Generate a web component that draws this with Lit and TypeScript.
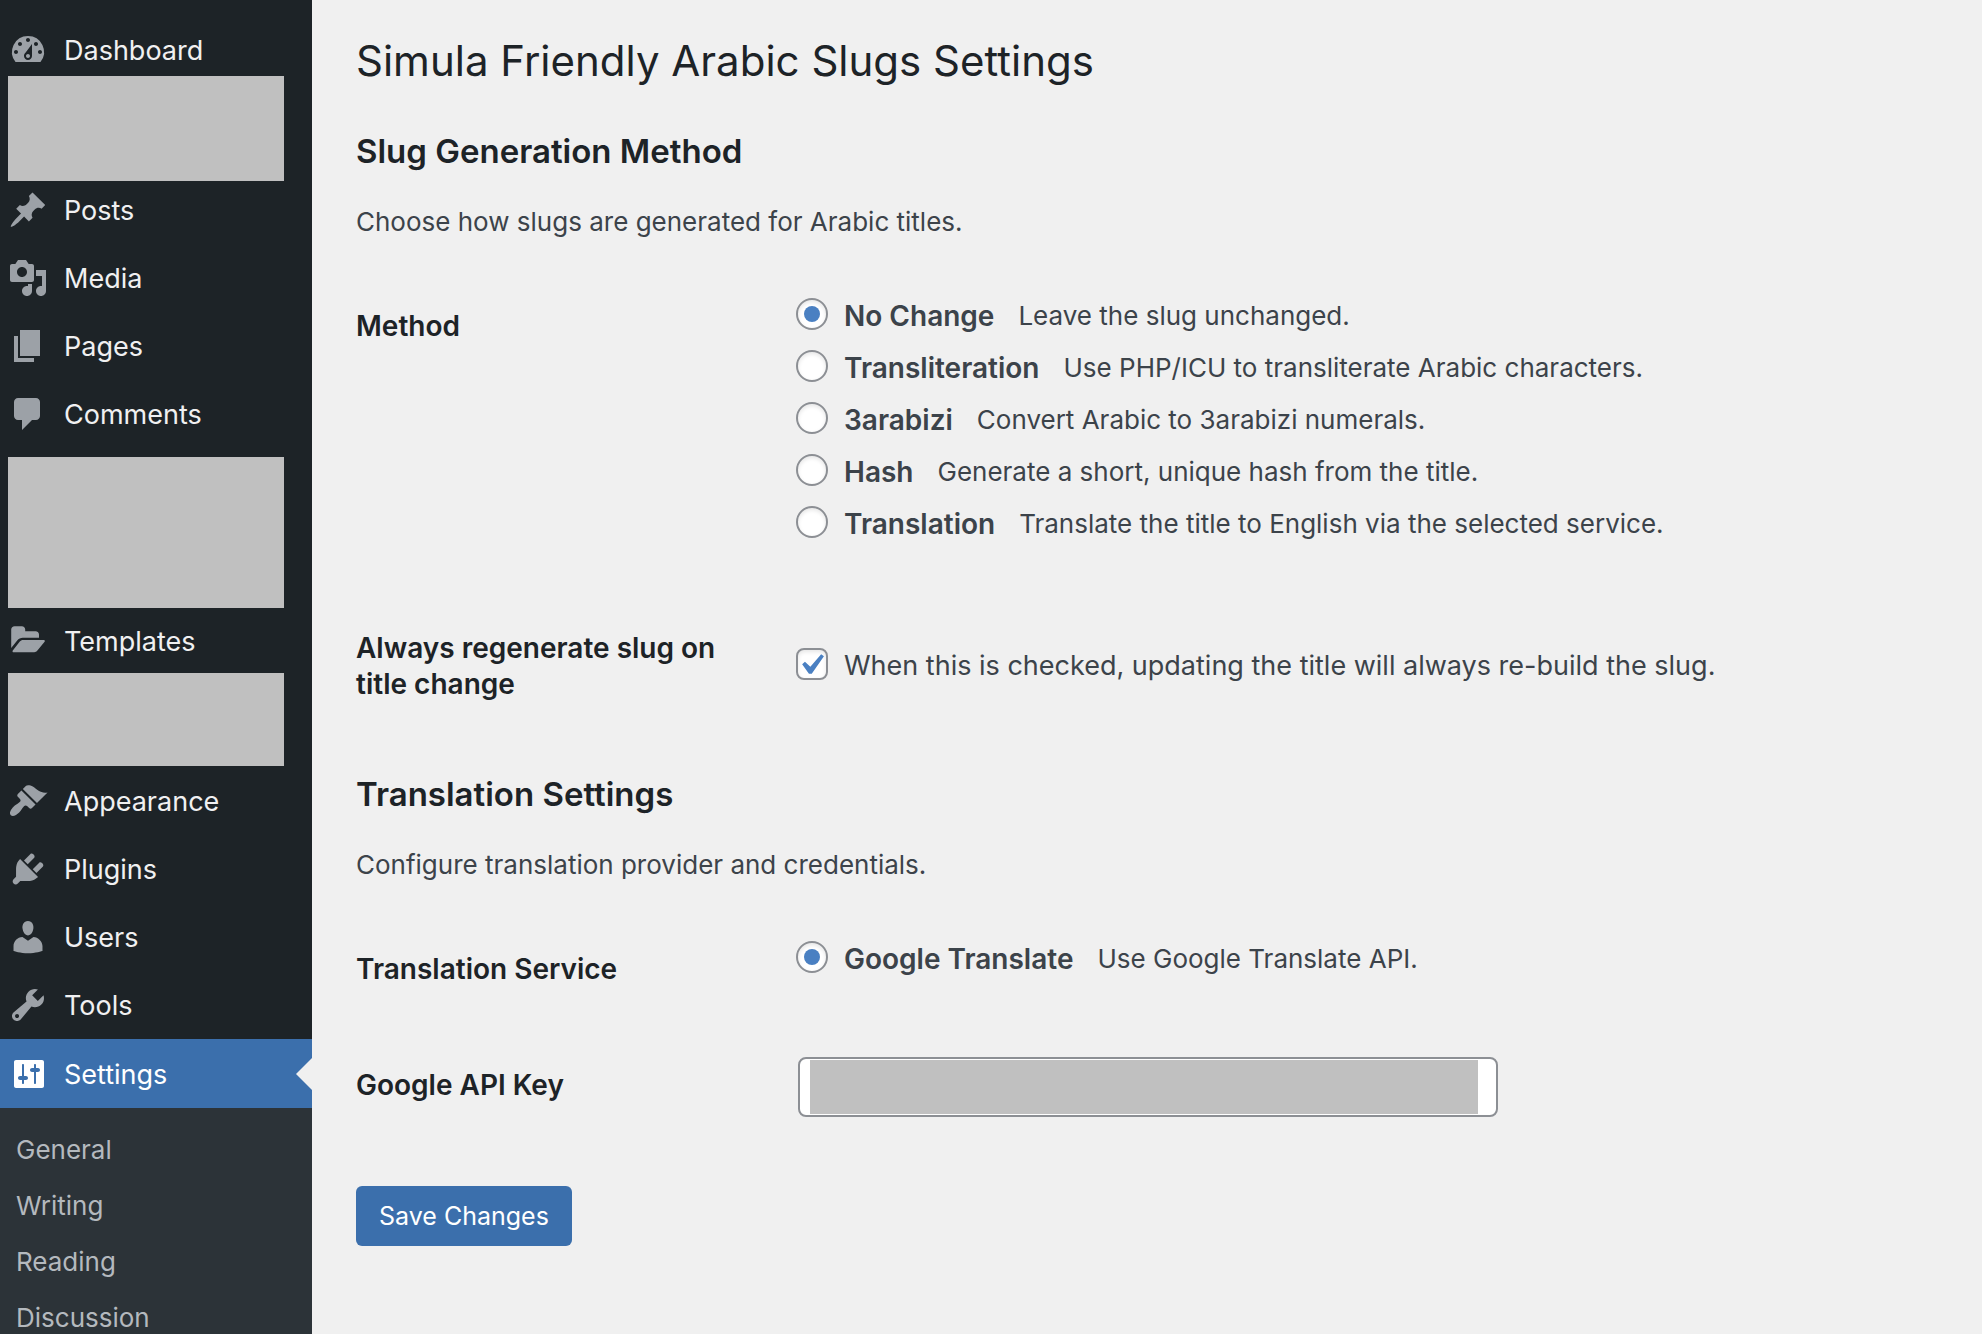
import { LitElement, html, css, svg, nothing } from "lit";
import { customElement, property, state } from "lit/decorators.js";
import { classMap } from "lit/directives/class-map.js";

const ICONS: Record<string, string> = {
  dashboard:
    "M3.76 16h12.48A7.998 7.998 0 0 0 10 3a7.998 7.998 0 0 0-6.24 13zM10 4c.55 0 1 .45 1 1s-.45 1-1 1-1-.45-1-1 .45-1 1-1zM6 6c.55 0 1 .45 1 1s-.45 1-1 1-1-.45-1-1 .45-1 1-1zm8 0c.55 0 1 .45 1 1s-.45 1-1 1-1-.45-1-1 .45-1 1-1zm-5.37 5.55L12 7v6c0 1.1-.9 2-2 2s-2-.9-2-2c0-.57.24-1.08.63-1.45zM4 10c.55 0 1 .45 1 1s-.45 1-1 1-1-.45-1-1 .45-1 1-1zm12 0c.55 0 1 .45 1 1s-.45 1-1 1-1-.45-1-1 .45-1 1-1zm-5 3c0-.55-.45-1-1-1s-1 .45-1 1 .45 1 1 1 1-.45 1-1z",
  posts:
    "M10.44 3.02l1.82-1.82 6.36 6.35-1.83 1.82c-1.05-.68-2.48-.57-3.41.36l-.75.75c-.92.93-1.04 2.35-.35 3.41l-1.83 1.82-2.41-2.41-2.8 2.79c-.42.42-3.38 2.71-3.8 2.29s1.86-3.39 2.28-3.81l2.79-2.79L4.1 9.36l1.83-1.82c1.05.69 2.48.57 3.4-.36l.75-.75c.93-.92 1.05-2.35.36-3.41z",
  media:
    "M13 11V4c0-.55-.45-1-1-1h-1.67L9 1H5L3.67 3H2c-.55 0-1 .45-1 1v7c0 .55.45 1 1 1h10c.55 0 1-.45 1-1zM7 4.5c1.38 0 2.5 1.12 2.5 2.5S8.38 9.5 7 9.5 4.5 8.38 4.5 7 5.62 4.5 7 4.5zM14 6h5v10.5c0 1.38-1.12 2.5-2.5 2.5S14 17.88 14 16.5s1.12-2.5 2.5-2.5c.17 0 .34.02.5.05V9h-3V6zm-4 8.05V13h2v3.5c0 1.38-1.12 2.5-2.5 2.5S7 17.88 7 16.5 8.12 14 9.5 14c.17 0 .34.02.5.05z",
  pages: "M6 15V2h10v13H6zm-1 1h8v2H3V5h2v11z",
  comments:
    "M5 2h9c1.1 0 2 .9 2 2v7c0 1.1-.9 2-2 2h-2l-5 5v-5H5c-1.1 0-2-.9-2-2V4c0-1.1.9-2 2-2z",
  templates:
    "M1.6 4.3c0-1 .7-1.7 1.7-1.7h3.6c1 0 1.7.7 1.7 1.7v.8h5.2c1 0 1.7.7 1.7 1.7v1.6H7.4c-1.1 0-2.1.5-2.8 1.3l-3 3.8zM5.9 10.3c.4-.5 1-.8 1.6-.8h10.4c.5 0 .7.5.4.9l-3.6 4.4c-.4.5-1 .8-1.6.8H2.8c-.5 0-.7-.5-.4-.9z",
  appearance:
    "M14.48 11.06L7.41 3.99l1.5-1.5c.5-.56 2.3-.47 3.51.32 1.21.8 1.43 1.28 2.91 2.1 1.18.64 2.45 1.26 4.45.85zm-.71.71L6.7 4.7 4.93 6.47c-.39.39-.39 1.02 0 1.41l1.06 1.06c.39.39.39 1.03 0 1.42-.6.6-1.43 1.11-2.21 1.69-.35.26-.7.53-1.01.84C1.43 14.23.4 16.08 1.4 17.07c.99 1 2.84-.03 4.18-1.36.31-.31.58-.66.85-1.02.57-.78 1.08-1.61 1.69-2.21.39-.39 1.02-.39 1.41 0l1.06 1.06c.39.39 1.02.39 1.41 0z",
  plugins:
    "M13.11 4.36L9.87 7.6 8 5.73l3.24-3.24c.35-.34 1.05-.2 1.56.32.52.51.66 1.21.31 1.55zm-8 1.77l.91-1.12 9.01 9.01-1.19.84c-.71.71-2.63 1.16-3.82 1.16H6.14L4.9 17.26c-.59.59-1.54.59-2.12 0-.59-.58-.59-1.53 0-2.12l1.24-1.24v-3.88c0-1.13.4-3.19 1.09-3.89zm7.26 3.97l3.24-3.24c.34-.35 1.04-.21 1.55.31.52.51.66 1.21.31 1.55l-3.24 3.25z",
  users:
    "M10 9.25c-2.27 0-2.73-3.44-2.73-3.44C7 4.02 7.82 2 9.97 2c2.16 0 2.98 2.02 2.71 3.81 0 0-.41 3.44-2.68 3.44zm0 2.57L12.72 10c2.39 0 4.52 2.33 4.52 4.53v2.49s-3.65 1.13-7.24 1.13c-3.65 0-7.24-1.13-7.24-1.13v-2.49c0-2.25 1.94-4.48 4.47-4.48z",
  tools:
    "M16.68 9.77c-1.34 1.34-3.3 1.67-4.95.99l-5.41 6.52c-.99.99-2.59.99-3.58 0s-.99-2.59 0-3.57l6.52-5.42c-.68-1.65-.35-3.61.99-4.95 1.28-1.28 3.12-1.62 4.72-1.06l-2.89 2.89 2.82 2.82 2.86-2.87c.53 1.58.18 3.39-1.08 4.65zM3.81 16.21c.4.39 1.04.39 1.43 0 .4-.4.4-1.04 0-1.43-.39-.4-1.03-.4-1.43 0-.39.39-.39 1.03 0 1.43z",
  settings:
    "M18 16V4c0-.55-.45-1-1-1H4c-.55 0-1 .45-1 1v12c0 .55.45 1 1 1h13c.55 0 1-.45 1-1zM8 11h1c.55 0 1 .45 1 1s-.45 1-1 1H8v1.5c0 .28-.22.5-.5.5s-.5-.22-.5-.5V13H6c-.55 0-1-.45-1-1s.45-1 1-1h1V5.5c0-.28.22-.5.5-.5s.5.22.5.5V11zm5-2h-1c-.55 0-1-.45-1-1s.45-1 1-1h1V5.5c0-.28.22-.5.5-.5s.5.22.5.5V7h1c.55 0 1 .45 1 1s-.45 1-1 1h-1v5.5c0 .28-.22.5-.5.5s-.5-.22-.5-.5V9z",
};

type MenuEntry =
  | { kind: "link"; id: string; label: string; children?: string[] }
  | { kind: "hidden"; size: string };

const MENU: MenuEntry[] = [
  { kind: "link", id: "dashboard", label: "Dashboard" },
  { kind: "hidden", size: "medium" },
  { kind: "link", id: "posts", label: "Posts" },
  { kind: "link", id: "media", label: "Media" },
  { kind: "link", id: "pages", label: "Pages" },
  { kind: "link", id: "comments", label: "Comments" },
  { kind: "hidden", size: "large" },
  { kind: "link", id: "templates", label: "Templates" },
  { kind: "hidden", size: "small" },
  { kind: "link", id: "appearance", label: "Appearance" },
  { kind: "link", id: "plugins", label: "Plugins" },
  { kind: "link", id: "users", label: "Users" },
  { kind: "link", id: "tools", label: "Tools" },
  {
    kind: "link",
    id: "settings",
    label: "Settings",
    children: ["General", "Writing", "Reading", "Discussion"],
  },
];

@customElement("admin-menu")
export class AdminMenu extends LitElement {
  @property() current = "settings";

  static styles = css`
    :host {
      display: block;
      background: #1d2327;
      overflow: hidden;
    }
    .menu,
    .submenu {
      list-style: none;
      margin: 0;
      padding: 0;
    }
    .menu {
      padding-top: 16px;
    }
    .link {
      display: flex;
      align-items: center;
      gap: 16px;
      height: 68px;
      padding: 0 8px;
      color: #f0f0f1;
      font-size: 27px;
      line-height: 36px;
      text-decoration: none;
    }
    .label {
      padding-top: 2px;
    }
    .icon {
      width: 40px;
      height: 40px;
      flex: none;
      fill: #9ca1a7;
    }
    .current {
      position: relative;
      height: 69px;
      background: #3b6fac;
      color: #fff;
    }
    .current .icon {
      fill: #fff;
    }
    .current::after {
      content: "";
      position: absolute;
      right: 0;
      top: 50%;
      margin-top: -16px;
      border: 16px solid transparent;
      border-left-width: 0;
      border-right-color: #f0f0f0;
    }
    .hidden {
      position: relative;
      background: #c0c0c0;
    }
    .medium {
      height: 105px;
      margin: -8px 28px -5px 8px;
    }
    .large {
      height: 151px;
      margin: 9px 28px -1px 8px;
    }
    .small {
      height: 93px;
      margin: -2px 28px 1px 8px;
    }
    .submenu {
      padding: 14px 0;
      background: #2c3338;
    }
    .sublink {
      display: block;
      padding: 0 16px;
      color: #b4b9be;
      font-size: 26px;
      line-height: 56px;
      text-decoration: none;
    }
  `;

  render() {
    return html`<nav aria-label="Main menu">
      <ul class="menu">
        ${MENU.map((e) =>
          e.kind === "hidden"
            ? html`<li class="hidden ${e.size}" aria-hidden="true"></li>`
            : html`<li>
                <a
                  class=${classMap({ link: true, current: e.id === this.current })}
                  href="#${e.id}"
                >
                  <svg class="icon" viewBox="0 0 20 20" aria-hidden="true">
                    ${svg`<path d=${ICONS[e.id]} />`}
                  </svg>
                  <span class="label">${e.label}</span>
                </a>
                ${e.children
                  ? html`<ul class="submenu">
                      ${e.children.map(
                        (c) => html`<li><a class="sublink" href="#${c.toLowerCase()}">${c}</a></li>`
                      )}
                    </ul>`
                  : nothing}
              </li>`
        )}
      </ul>
    </nav>`;
  }
}

interface Choice {
  id: string;
  name: string;
  hint: string;
}

const METHODS: Choice[] = [
  { id: "none", name: "No Change", hint: "Leave the slug unchanged." },
  { id: "transliteration", name: "Transliteration", hint: "Use PHP/ICU to transliterate Arabic characters." },
  { id: "arabizi", name: "3arabizi", hint: "Convert Arabic to 3arabizi numerals." },
  { id: "hash", name: "Hash", hint: "Generate a short, unique hash from the title." },
  { id: "translation", name: "Translation", hint: "Translate the title to English via the selected service." },
];

const SERVICES: Choice[] = [
  { id: "google", name: "Google Translate", hint: "Use Google Translate API." },
];

@customElement("slug-settings")
export class SlugSettings extends LitElement {
  @state() private method = "none";
  @state() private service = "google";
  @state() private regenerate = true;

  static styles = css`
    :host {
      display: block;
      padding: 30px 40px 40px 44px;
      color: #3c434a;
      font-size: 26px;
      line-height: 40px;
    }
    h1,
    h2,
    p {
      margin: 0;
    }
    h1,
    h2,
    .term {
      color: #1d2327;
    }
    h1 {
      font-size: 42px;
      font-weight: 400;
      line-height: 62px;
      margin-bottom: 37px;
    }
    h2 {
      font-size: 33px;
      font-weight: 600;
      line-height: 44px;
      margin-bottom: 29px;
    }
    .fields {
      margin-top: 26px;
      margin-bottom: 30px;
    }
    .row {
      display: grid;
      grid-template-columns: 372px minmax(0, 1fr);
      column-gap: 68px;
      align-items: start;
    }
    .term {
      padding: 40px 0;
      font-size: 28px;
      font-weight: 600;
      line-height: 36px;
    }
    .choices {
      padding: 22px 0;
    }
    .methods {
      padding-bottom: 40px;
    }
    .middle {
      align-self: center;
    }
    .choice {
      display: flex;
      align-items: center;
      width: fit-content;
      min-height: 52px;
      font-size: 27px;
      line-height: 36px;
    }
    .box {
      position: relative;
      display: grid;
      flex: none;
      margin: 0 16px 4px 0;
    }
    .name {
      font-size: 28px;
      font-weight: 600;
    }
    .hint {
      margin-left: 24px;
      font-size: 26px;
    }
    input {
      appearance: none;
      box-sizing: border-box;
      margin: 0;
      border: 2px solid #8c8f94;
      background: #fff;
    }
    .tick,
    .dot {
      width: 32px;
      height: 32px;
      box-shadow: inset 0 2px 4px rgba(0, 0, 0, 0.1);
    }
    .tick {
      border-radius: 8px;
    }
    .dot {
      display: grid;
      place-items: center;
      border-radius: 50%;
    }
    .dot:checked::before {
      content: "";
      width: 16px;
      height: 16px;
      border-radius: 50%;
      background: #4a80c2;
    }
    .mark {
      position: absolute;
      left: -6px;
      top: -4px;
      width: 42px;
      height: 42px;
      fill: #4a80c2;
      pointer-events: none;
    }
    .key {
      position: relative;
      width: 100%;
      max-width: 700px;
      margin: 30px 2px 0;
    }
    .text {
      display: block;
      width: 100%;
      height: 60px;
      padding: 0 16px;
      border-radius: 8px;
      font: inherit;
      color: #2c3338;
    }
    .cover {
      position: absolute;
      inset: 3px 20px 3px 12px;
      background: #c0c0c0;
    }
    .save {
      height: 60px;
      margin-top: 13px;
      padding: 0 23px;
      border: 0;
      border-radius: 6px;
      background: #3b6fac;
      color: #fff;
      font: inherit;
      font-size: 25px;
    }
  `;

  private choices(group: string, list: Choice[], value: string, pick: (id: string) => void) {
    return list.map(
      (c) => html`<label class="choice">
        <span class="box">
          <input
            class="dot"
            type="radio"
            name=${group}
            value=${c.id}
            .checked=${c.id === value}
            @change=${() => pick(c.id)}
          />
        </span>
        <span class="name">${c.name}</span>
        <span class="hint">${c.hint}</span>
      </label>`
    );
  }

  render() {
    return html`
      <h1>Simula Friendly Arabic Slugs Settings</h1>
      <form @submit=${(e: Event) => e.preventDefault()}>
        <h2>Slug Generation Method</h2>
        <p>Choose how slugs are generated for Arabic titles.</p>
        <div class="fields">
          <div class="row">
            <div class="term" id="method-term">Method</div>
            <div class="choices methods" role="radiogroup" aria-labelledby="method-term">
              ${this.choices("method", METHODS, this.method, (id) => (this.method = id))}
            </div>
          </div>
          <div class="row">
            <div class="term">Always regenerate slug on title change</div>
            <label class="choice middle">
              <span class="box">
                <input
                  class="tick"
                  type="checkbox"
                  .checked=${this.regenerate}
                  @change=${(e: Event) =>
                    (this.regenerate = (e.target as HTMLInputElement).checked)}
                />
                ${this.regenerate
                  ? html`<svg class="mark" viewBox="0 0 20 20" aria-hidden="true">
                      <path d="M14.83 4.89l1.34.94-5.81 8.38H9.02L5.78 9.67l1.34-1.25 2.57 2.4z" />
                    </svg>`
                  : nothing}
              </span>
              <span>When this is checked, updating the title will always re-build the slug.</span>
            </label>
          </div>
        </div>

        <h2>Translation Settings</h2>
        <p>Configure translation provider and credentials.</p>
        <div class="fields">
          <div class="row">
            <div class="term" id="service-term">Translation Service</div>
            <div class="choices" role="radiogroup" aria-labelledby="service-term">
              ${this.choices("service", SERVICES, this.service, (id) => (this.service = id))}
            </div>
          </div>
          <div class="row">
            <label class="term" for="api-key">Google API Key</label>
            <div class="key">
              <input class="text" id="api-key" type="text" autocomplete="off" />
              <span class="cover" aria-hidden="true"></span>
            </div>
          </div>
        </div>
        <button class="save" type="submit">Save Changes</button>
      </form>
    `;
  }
}

@customElement("app-root")
export class AppRoot extends LitElement {
  static styles = css`
    :host {
      display: grid;
      grid-template-columns: 312px minmax(0, 1fr);
      height: 100vh;
      overflow: hidden;
      background: #f0f0f0;
      font-family: Inter, "Liberation Sans", sans-serif;
    }
  `;

  render() {
    return html`<admin-menu current="settings"></admin-menu>
      <slug-settings></slug-settings>`;
  }
}
